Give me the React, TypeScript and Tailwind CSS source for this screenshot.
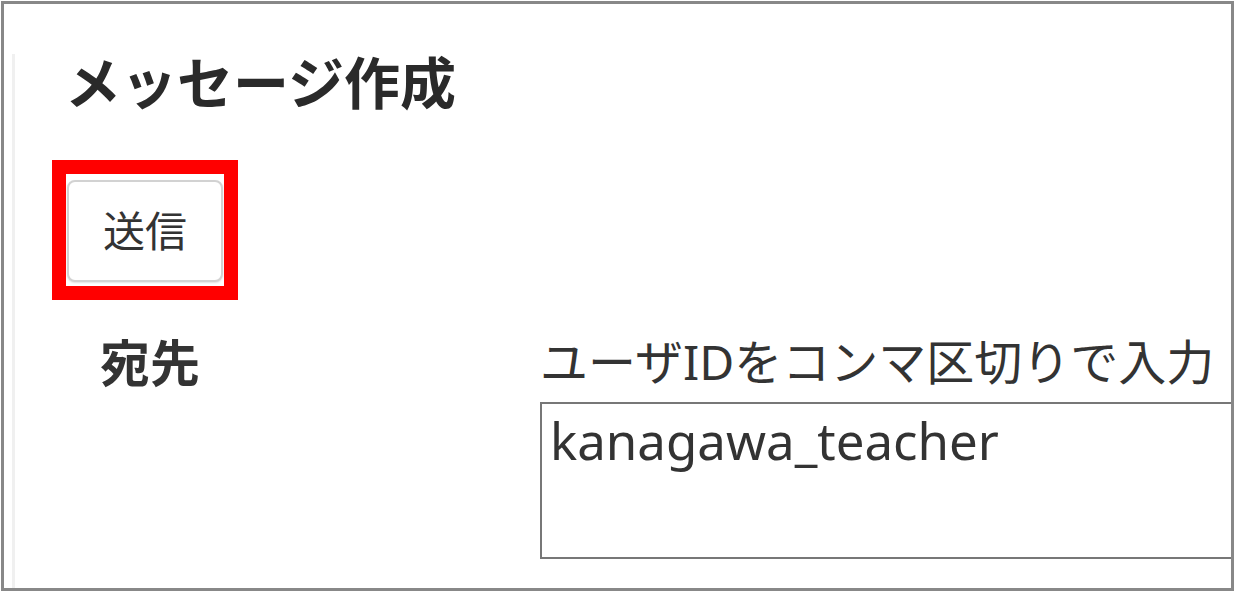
const jp = "font-['Noto_Sans','Noto_Sans_CJK_JP',sans-serif]";

function SendButton() {
  // red highlight frame around the send button
  return (
    <div className="ml-[37px] mt-[50px] w-[186px] h-[140px] border-[14px] border-[#ff0000] pt-[6px] pl-px">
      <button
        type="button"
        className={`w-[156px] h-[102px] rounded-[8px] border-2 border-[#d2d2d2] bg-white shadow-[0_1px_2px_rgba(0,0,0,0.12)] text-[42px] leading-none text-[#333] ${jp}`}
      >
        送信
      </button>
    </div>
  );
}

export default function App() {
  return (
    <div className="w-[1235px] h-[592px] bg-white p-px">
      <div className="h-full border-[3px] border-[#888] overflow-hidden pl-[8px] pt-[18px]">
        <div className={`h-full border-l-[3px] border-[#f0f0f0] ${jp} text-[#333]`}>
          <h1 className="ml-[50px] mt-[32px] text-[56px] font-bold leading-none text-[#2a2a2a]">メッセージ作成</h1>

          <SendButton />

          <div className="flex mt-[38px]">
            <div className="w-[525px] shrink-0 pl-[85px] text-[50px] font-bold leading-none">宛先</div>
            <div className="shrink-0">
              <div className="text-[48px] leading-none whitespace-nowrap">ユーザIDをコンマ区切りで入力</div>
              <textarea
                readOnly
                defaultValue="kanagawa_teacher"
                className={`block mt-[16px] w-[720px] h-[157px] border-2 border-[#777] bg-white resize-none outline-none pl-[8px] pt-[11px] text-[51px] leading-none text-[#333] ${jp}`}
              />
            </div>
          </div>
        </div>
      </div>
    </div>
  );
}
